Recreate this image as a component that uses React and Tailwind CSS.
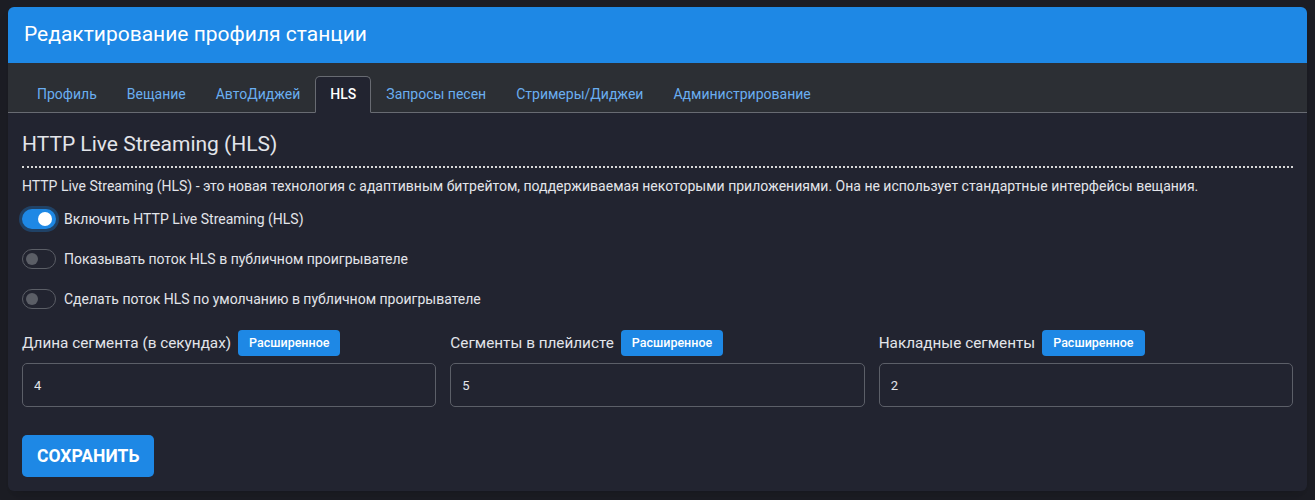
import { useState } from "react";

const tabs = ["Профиль", "Вещание", "АвтоДиджей", "HLS", "Запросы песен", "Стримеры/Диджеи", "Администрирование"];

function Toggle({ on, onClick, label }) {
  return (
    <label className="flex items-center gap-[8px] cursor-pointer" onClick={onClick}>
      {on ? (
        <span className="relative w-[34px] h-[20px] rounded-full bg-[#1e88e5] ring-[3px] ring-[#1e88e5]/30 flex items-center">
          <span className="absolute right-[4px] w-[14px] h-[14px] rounded-full bg-white" />
        </span>
      ) : (
        <span className="relative w-[34px] h-[20px] rounded-full border border-[#5b5e66] flex items-center">
          <span className="absolute left-[3px] w-[12px] h-[12px] rounded-full bg-[#5b5e66]" />
        </span>
      )}
      <span className="text-[14px] leading-[20px] text-[#e3e5ea]">{label}</span>
    </label>
  );
}

function Field({ label, value }) {
  return (
    <div className="flex-1">
      <div className="flex items-center gap-[7px] h-[26px]">
        <span className="text-[15.3px] text-[#e3e5ea]">{label}</span>
        <span className="bg-[#1e88e5] text-white text-[12.5px] font-medium rounded-[4px] px-[11px] h-[26px] flex items-center">Расширенное</span>
      </div>
      <input
        defaultValue={value}
        className="mt-[7px] w-full h-[44px] rounded-[5px] border border-[#5c5f68] bg-transparent px-[11px] text-[13px] text-[#e3e5ea] outline-none"
      />
    </div>
  );
}

export default function App() {
  const [active, setActive] = useState("HLS");
  const [opts, setOpts] = useState([true, false, false]);
  const flip = (i) => setOpts(opts.map((v, j) => (j === i ? !v : v)));

  return (
    <div className="min-h-[500px] bg-[#1c1d24] px-[8px] pt-[7px] pr-[8px]" style={{ fontFamily: "Roboto, 'Noto Sans', sans-serif" }}>
      <div className="w-[1299px] rounded-[6px] overflow-hidden bg-[#222430] shadow-lg">
        <div className="h-[56px] bg-[#1e88e5] flex items-center px-[16px]">
          <h1 className="text-[21px] text-white">Редактирование профиля станции</h1>
        </div>

        <div className="h-[50px] bg-[#2c2f34] border-b border-[#686b72] flex items-end px-[14px]">
          {tabs.map((t) =>
            t === active ? (
              <button key={t} className="h-[37px] -mb-px px-[14px] rounded-t-[5px] border border-[#686b72] border-b-[#222430] bg-[#222430] text-[14px] text-white font-medium">
                {t}
              </button>
            ) : (
              <button key={t} onClick={() => setActive(t)} className="h-[36px] px-[15px] text-[14px] text-[#6aaef0]">
                {t}
              </button>
            )
          )}
        </div>

        <div className="px-[14px] pt-[17px] pb-[14px]">
          <h2 className="text-[21px] text-[#e3e5ea] leading-[28px]">HTTP Live Streaming (HLS)</h2>
          <div className="mt-[8px] border-b-2 border-dotted border-[#d8d8d8]" />
          <p className="mt-[8px] text-[14px] text-[#e3e5ea]">
            HTTP Live Streaming (HLS) - это новая технология с адаптивным битрейтом, поддерживаемая некоторыми приложениями. Она не использует стандартные интерфейсы вещания.
          </p>

          <div className="mt-[12px] flex flex-col gap-[20px]">
            <Toggle on={opts[0]} onClick={() => flip(0)} label="Включить HTTP Live Streaming (HLS)" />
            <Toggle on={opts[1]} onClick={() => flip(1)} label="Показывать поток HLS в публичном проигрывателе" />
            <Toggle on={opts[2]} onClick={() => flip(2)} label="Сделать поток HLS по умолчанию в публичном проигрывателе" />
          </div>

          <div className="mt-[21px] flex gap-[14px]">
            <Field label="Длина сегмента (в секундах)" value="4" />
            <Field label="Сегменты в плейлисте" value="5" />
            <Field label="Накладные сегменты" value="2" />
          </div>

          <button className="mt-[28px] h-[42px] px-[15px] rounded-[5px] bg-[#1e88e5] text-white text-[17.5px] font-bold">
            СОХРАНИТЬ
          </button>
        </div>
      </div>
    </div>
  );
}
